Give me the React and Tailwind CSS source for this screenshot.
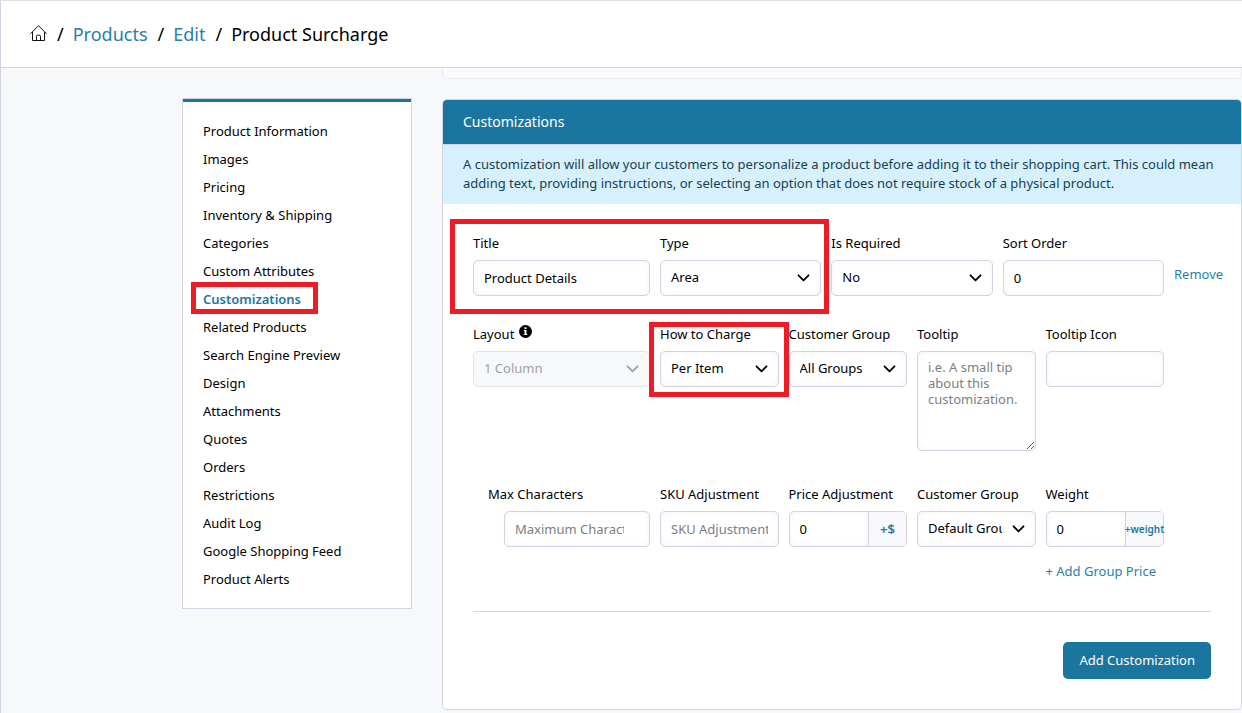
import React from "react";

const NAV = [
  "Product Information",
  "Images",
  "Pricing",
  "Inventory & Shipping",
  "Categories",
  "Custom Attributes",
  "Customizations",
  "Related Products",
  "Search Engine Preview",
  "Design",
  "Attachments",
  "Quotes",
  "Orders",
  "Restrictions",
  "Audit Log",
  "Google Shopping Feed",
  "Product Alerts",
];

const CONTROL =
  "block w-full h-9 rounded-[5px] border border-[#d2d3e3] bg-white pl-[10px] text-[13px] text-black placeholder:text-[#7b7f85] shadow-[inset_0_0_6px_rgba(0,0,0,0.05)]";

function HomeIcon() {
  return (
    <svg className="h-4 w-[17px]" viewBox="0 0 17 16" fill="none" stroke="#111" strokeWidth="1" aria-hidden="true">
      <path d="M0.4 8.8 8.5 0.7l8.1 8.1" />
      <path d="M2.5 7v8.5h12V7" />
      <path d="M6.5 15.5v-4.3c0-.6.4-1 1-1h2c.6 0 1 .4 1 1v4.3" />
    </svg>
  );
}

function InfoIcon() {
  return (
    <svg className="mb-[5px] h-[13px] w-[13px]" viewBox="0 0 13 13" aria-hidden="true">
      <circle cx="6.5" cy="6.5" r="6.5" fill="#000" />
      <path d="M5.5 2.3h2v1.8h-2zM4.8 5.1h2.7v3.8h.8v1.2H4.8V8.9h.8V6.3h-.8z" fill="#fff" />
    </svg>
  );
}

function Chevron({ className }) {
  return (
    <svg
      className={"pointer-events-none absolute right-[11px] top-[14px] h-2 w-[13px] " + className}
      viewBox="0 0 13 8"
      fill="none"
      stroke="currentColor"
      strokeWidth="1.8"
      strokeLinecap="round"
      strokeLinejoin="round"
      aria-hidden="true"
    >
      <path d="M1.5 1.3l5 5 5-5" />
    </svg>
  );
}

function Highlight({ className }) {
  return <span className={"pointer-events-none absolute z-10 border-[5px] border-[#ee1c24] " + className} />;
}

function Slash() {
  return <span className="pl-px">/</span>;
}

function Field({ id, label, icon, labelClass = "", boxClass = "", children }) {
  return (
    <div className="relative min-w-0 self-start">
      <label htmlFor={id} className={"mb-[7px] flex h-5 items-center gap-[5px] whitespace-nowrap " + labelClass}>
        {label}
        {icon}
      </label>
      <div className={boxClass}>{children}</div>
    </div>
  );
}

function Select({ id, value, disabled }) {
  return (
    <div className="relative">
      <select
        id={id}
        disabled={disabled}
        className={CONTROL + " appearance-none pb-[2px] pr-[33px] disabled:bg-[#f7f8fa] disabled:text-[#a0a0a4] disabled:border-[#e1e2ec] disabled:shadow-none disabled:opacity-100"}
      >
        <option>{value}</option>
      </select>
      <Chevron className={disabled ? "text-[#a0a0a4]" : "text-black"} />
    </div>
  );
}

function AddonInput({ id, children }) {
  return (
    <div className="flex h-9 rounded-[5px] border border-[#d2d3e3] bg-white">
      <input
        id={id}
        type="text"
        defaultValue="0"
        className="min-w-0 flex-1 rounded-l-[4px] pl-[10px] text-[13px] shadow-[inset_0_0_6px_rgba(0,0,0,0.05)]"
      />
      <span className="flex w-[38px] shrink-0 items-center justify-center rounded-r-[4px] border-l border-[#d2d3e3] bg-[#f7f8fa] font-semibold text-[#1b769f]">
        {children}
      </span>
    </div>
  );
}

export default function App() {
  return (
    <div className="min-h-screen border-l border-t border-l-[#d2d3e3] border-t-[#dfdfe2] bg-[#f7f8fa] font-['Noto_Sans',sans-serif] text-[13px] leading-5 text-black">
      <header className="border-b border-[#d2d6e3] bg-white">
        <nav aria-label="Breadcrumb" className="flex h-[66px] items-center gap-[9px] pl-[29px] text-[18px] leading-6">
          <a href="#home" aria-label="Home" className="mb-[3px]">
            <HomeIcon />
          </a>
          <Slash />
          <a href="#products" className="text-[#2680a8]">Products</a>
          <Slash />
          <a href="#edit" className="text-[#2680a8]">Edit</a>
          <Slash />
          <span>Product Surcharge</span>
        </nav>
      </header>

      <div className="flex items-start gap-[30px] pl-[181px]">
        <aside className="mt-[30px] w-[230px] shrink-0 border border-[#d2d3e3] bg-white">
          <ul className="border-t-[3px] border-[#1b769f] px-5 py-[15px]">
            {NAV.map((item) => (
              <li key={item} className="relative">
                <a
                  href="#section"
                  className={"block leading-7 " + (item === "Customizations" ? "font-semibold text-[#1b769f]" : "")}
                >
                  {item}
                </a>
                {item === "Customizations" && <Highlight className="-left-3 -top-[3px] bottom-[-1px] w-[127px]" />}
              </li>
            ))}
          </ul>
        </aside>

        <main className="min-w-0 flex-1">
          <div className="h-[11px] rounded-b-[5px] border border-t-0 border-[#e9eaf1] bg-[#f9fafb]" />

          <section className="mt-5 rounded-[5px] border border-[#d2d3e3] bg-white">
            <h2 className="flex h-11 items-center rounded-t-[4px] bg-[#1b769f] px-5 text-[14px] text-white">
              Customizations
            </h2>
            <p className="border-t border-[#d2d3e3] bg-[#d6f1fd] px-5 pb-[11px] pt-[10px] leading-[19px] text-[#163f52]">
              A customization will allow your customers to personalize a product before adding it to their shopping
              cart. This could mean adding text, providing instructions, or selecting an option that does not require
              stock of a physical product.
            </p>

            <form className="px-[30px] pb-[30px] pt-[29px]">
              <div className="relative grid grid-cols-[531fr_484fr_484fr_484fr_37px] gap-x-[10px]">
                <Highlight className="col-span-2 col-start-1 -bottom-[18px] -left-[23px] -right-2 -top-[14px]" />
                <Field id="title" label="Title">
                  <input id="title" type="text" defaultValue="Product Details" className={CONTROL} />
                </Field>
                <Field id="type" label="Type">
                  <Select id="type" value="Area" />
                </Field>
                <Field id="required" label="Is Required">
                  <Select id="required" value="No" />
                </Field>
                <Field id="sort" label="Sort Order">
                  <input id="sort" type="text" defaultValue="0" className={CONTROL} />
                </Field>
                <a href="#remove" className="self-center pt-[18px] text-[#2680a8]">Remove</a>
              </div>

              <div className="mt-7 grid grid-cols-[354fr_237fr_237fr_237fr_237fr_37px] gap-x-[10px]">
                <Field id="layout" label="Layout" icon={<InfoIcon />}>
                  <Select id="layout" value="1 Column" disabled />
                </Field>
                <div className="relative min-w-0 self-start">
                  <Field id="charge" label="How to Charge">
                    <Select id="charge" value="Per Item" />
                  </Field>
                  <Highlight className="-bottom-[10px] -left-[11px] -right-[10px] -top-[2px]" />
                </div>
                <Field id="group" label="Customer Group">
                  <Select id="group" value="All Groups" />
                </Field>
                <Field id="tooltip" label="Tooltip">
                  <textarea
                    id="tooltip"
                    placeholder="i.e. A small tip about this customization."
                    className="block h-[100px] w-full resize rounded-[5px] border border-[#d2d3e3] px-[10px] pt-[7px] leading-4 shadow-[inset_0_0_6px_rgba(0,0,0,0.05)] placeholder:text-[#7b7f85]"
                  />
                </Field>
                <Field id="tooltip-icon" label="Tooltip Icon">
                  <input id="tooltip-icon" type="text" className={CONTROL} />
                </Field>
              </div>

              <div className="mt-[33px] grid grid-cols-[354fr_237fr_237fr_237fr_237fr_37px] gap-x-[10px]">
                <Field id="max" label="Max Characters" labelClass="pl-[15px]" boxClass="pl-[31px]">
                  <input id="max" type="text" placeholder="Maximum Characters" className={CONTROL + " pr-[25px]"} />
                </Field>
                <Field id="sku" label="SKU Adjustment">
                  <input id="sku" type="text" placeholder="SKU Adjustment" className={CONTROL + " pr-[10px]"} />
                </Field>
                <Field id="price" label="Price Adjustment">
                  <AddonInput id="price">+$</AddonInput>
                </Field>
                <Field id="price-group" label="Customer Group">
                  <Select id="price-group" value="Default Group" />
                </Field>
                <Field id="weight" label="Weight">
                  <AddonInput id="weight">
                    <span className="text-[10px]">+weight</span>
                  </AddonInput>
                </Field>
                <a href="#group-price" className="col-start-5 mt-[14px] whitespace-nowrap text-[#2680a8]">
                  + Add Group Price
                </a>
              </div>

              <hr className="mt-[30px] border-[#d2d3e3]" />
              <div className="mt-[30px] flex justify-end">
                <button type="button" className="h-[37px] rounded-[5px] bg-[#1b769f] px-4 pb-px text-white">
                  Add Customization
                </button>
              </div>
            </form>
          </section>
        </main>
      </div>
    </div>
  );
}
